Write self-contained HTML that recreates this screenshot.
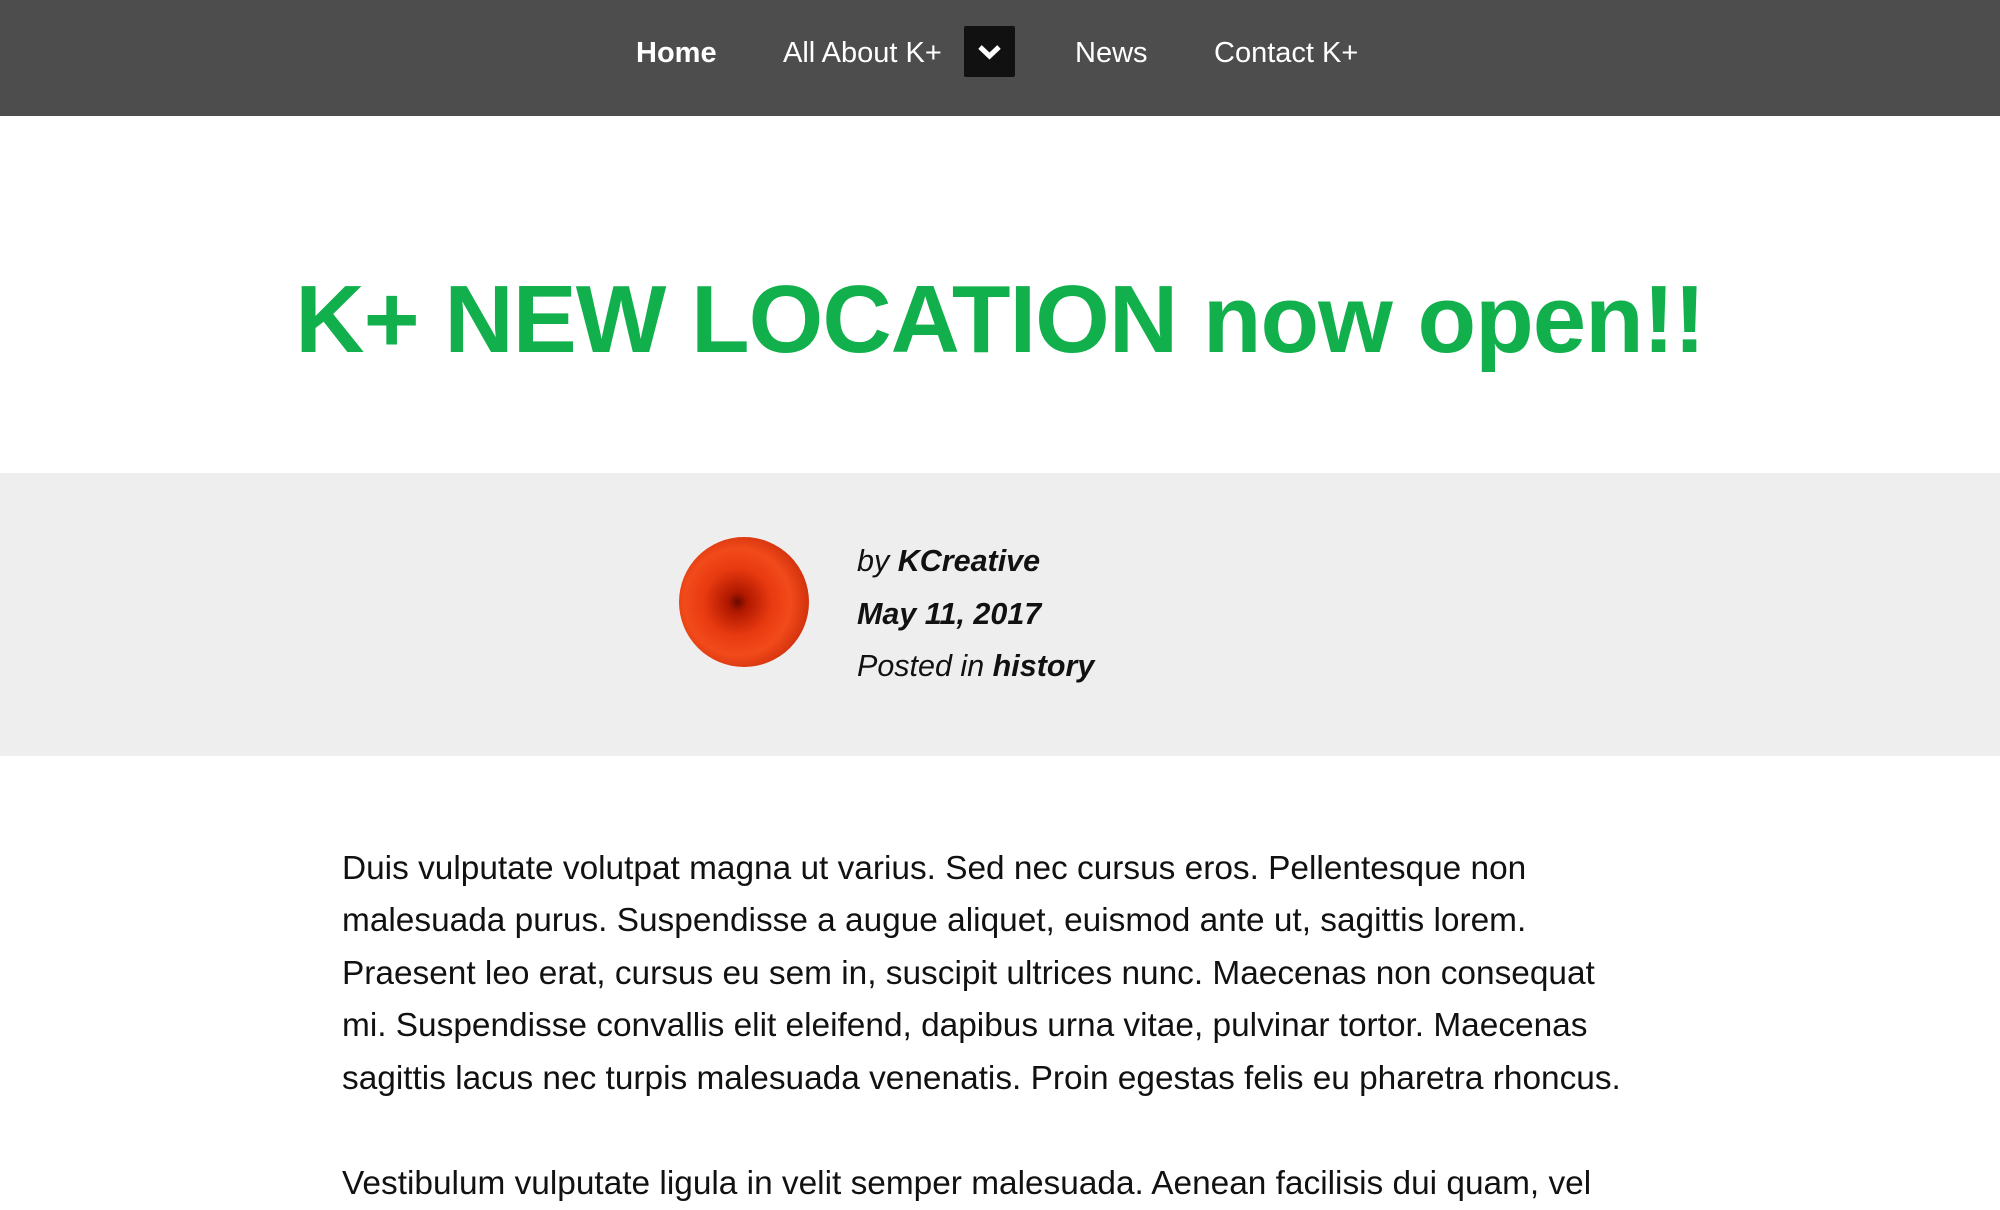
<!DOCTYPE html>
<html><head><meta charset="utf-8"><style>
*{margin:0;padding:0;box-sizing:border-box}
body{width:2000px;height:1200px;overflow:hidden;background:#fff;font-family:"Liberation Sans",sans-serif}
nav{position:absolute;left:0;top:0;width:2000px;height:116px;background:#4d4d4d;color:#fff;font-size:29px}
nav span{position:absolute;top:35px;line-height:36px}
.dd{position:absolute;left:964px;top:26px;width:51px;height:51px;background:#111;border-radius:2px}
h1{position:absolute;left:0;width:2000px;top:260px;text-align:center;color:#12b04c;font-size:96px;font-weight:bold;line-height:120px;letter-spacing:-1px}
.band{position:absolute;left:0;top:473px;width:2000px;height:283px;background:#eeeeee}
.av{position:absolute;left:679px;top:537px;width:130px;height:130px;border-radius:50%;background:radial-gradient(circle at 45% 50%,#6a0a00 0,#b01800 10%,#e83a10 35%,#f24a1a 55%,#c82a0a 80%,#a01e08 100%)}
.meta{position:absolute;left:857px;font-size:30.5px;font-style:italic;color:#111;line-height:36px}
.meta b{font-weight:bold}
.p{position:absolute;left:342px;width:1300px;font-size:33.4px;line-height:52.4px;color:#111}
</style></head><body>
<nav>
<span style="left:636px;font-weight:bold">Home</span>
<span style="left:783px">All About K+</span>
<div class="dd"><svg width="51" height="51" viewBox="0 0 51 51"><path d="M16 21 L25.5 30 L35 21" fill="none" stroke="#fff" stroke-width="5"/></svg></div>
<span style="left:1075px">News</span>
<span style="left:1214px">Contact K+</span>
</nav>
<h1>K+ NEW LOCATION now open!!</h1>
<div class="band"></div>
<div class="av"></div>
<div class="meta" style="top:543px">by <b>KCreative</b></div>
<div class="meta" style="top:596px"><b>May 11, 2017</b></div>
<div class="meta" style="top:648px">Posted in <b>history</b></div>
<div class="p" style="top:843px">Duis vulputate volutpat magna ut varius. Sed nec cursus eros. Pellentesque non malesuada purus. Suspendisse a augue aliquet, euismod ante ut, sagittis lorem. Praesent leo erat, cursus eu sem in, suscipit ultrices nunc. Maecenas non consequat mi. Suspendisse convallis elit eleifend, dapibus urna vitae, pulvinar tortor. Maecenas sagittis lacus nec turpis malesuada venenatis. Proin egestas felis eu pharetra rhoncus.</div>
<div class="p" style="top:1158px">Vestibulum vulputate ligula in velit semper malesuada. Aenean facilisis dui quam, vel</div>
</body></html>
